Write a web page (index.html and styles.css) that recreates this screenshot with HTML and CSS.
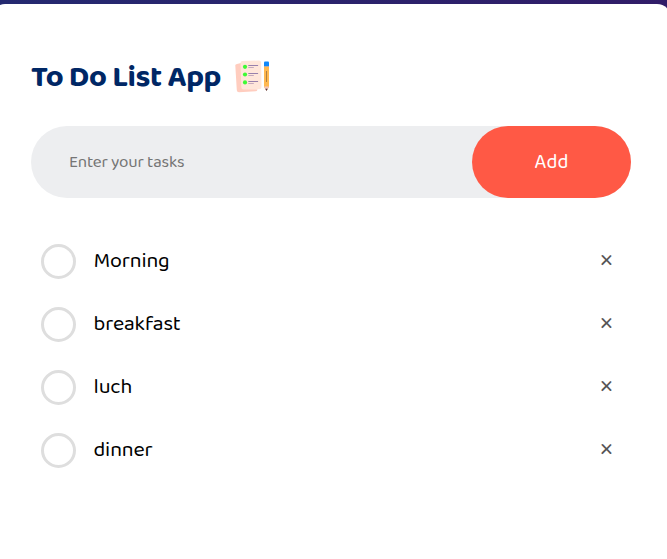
FILE: index.html
```html
<!DOCTYPE html>
<html lang="en">
<head>
<meta charset="utf-8">
<title>To Do List App</title>
<link rel="stylesheet" href="styles.css">
</head>
<body>
<main class="card">
  <h1 class="title"><span>To Do List App</span>
    <svg class="logo" width="36" height="36" viewBox="0 0 36 36">
      <path fill="#ffcdbf" d="M2 5 6 4l2 26 14.500.2-.5 1.500-1 .5-17 1q-2 0-2.200-2L.3 6.500Q.2 5.200 2 5Z"/>
      <path fill="#ffe6da" d="M7.500 2 24 1.500q2 0 2.100 2L26.500 28q0 2-2 2.200L8.500 30.500q-2 0-2.200-2L5.500 4q0-2 2-2Z"/>
      <g fill="#3dfa35"><circle cx="10" cy="7.800" r="2.100"/><circle cx="10" cy="15.500" r="2.100"/><circle cx="10" cy="23.400" r="2.100"/></g>
      <path stroke="#9880ac" stroke-width="1" d="M13.300 6.500h9.800M13.300 14.500h9.800M13.300 22.500h9.800"/>
      <path stroke="#c5a9bd" stroke-width="1" d="M13.300 8.500h5.500M13.300 16.500h5.500M13.300 24.500h5.500"/>
      <path fill="#ffb850" d="M29 6h5v22l-2.500 4-2.500-4Z"/>
      <path fill="#0f88fa" d="M29 3.500q0-1 1-1h3q1 0 1 1V7h-5Z"/>
      <path fill="#b8aaa0" d="M29 7h5v1h-5Z"/>
      <path stroke="#b07f3f" stroke-width="1" d="M31.500 12v11"/>
      <path fill="#f5c5bd" d="M29 27.500h5L31.500 32Z"/>
      <path fill="#49344b" d="M30.300 29.800h2.400L31.500 32Z"/>
    </svg>
  </h1>
  <div class="row">
    <input class="field" type="text" placeholder="Enter your tasks">
    <button class="add">Add</button>
  </div>
  <ul class="tasks">
    <li class="task"><i class="check"></i><span class="name">Morning</span><span class="close">×</span></li>
    <li class="task"><i class="check"></i><span class="name">breakfast</span><span class="close">×</span></li>
    <li class="task"><i class="check"></i><span class="name">luch</span><span class="close">×</span></li>
    <li class="task"><i class="check"></i><span class="name">dinner</span><span class="close">×</span></li>
  </ul>
</main>
</body>
</html>
```
FILE: styles.css
```css
* { box-sizing: border-box; margin: 0; padding: 0; }
html, body { height: 100%; overflow: hidden; }
body {
  padding-top: 4px;
  background: linear-gradient(90deg, #242970, #311c68);
  font-family: "Baloo 2", "Noto Sans", sans-serif;
}
.card {
  width: 680px;
  height: 555px;
  margin-left: -9px;
  padding: 54px 40px 0;
  border-radius: 14px 14px 0 0;
  background: #fff;
}
.title {
  display: flex;
  align-items: center;
  height: 38px;
  gap: 14px;
  color: #002765;
  font-size: 31px;
  font-weight: 700;
  letter-spacing: -0.45px;
  white-space: nowrap;
}
.title span { width: 190px; padding-top: 1px; }
.logo { flex: none; }
.row {
  display: flex;
  width: 600px;
  height: 72px;
  margin-top: 30px;
  border-radius: 36px;
  background: #edeef0;
}
.field {
  flex: 1;
  min-width: 0;
  padding-left: 38px;
  border: 0;
  outline: 0;
  background: transparent;
  font: 17px "Baloo 2", "Noto Sans", sans-serif;
  letter-spacing: -0.18px;
}
.field::placeholder { color: #757575; }
.add {
  width: 159px;
  border: 0;
  border-radius: 36px;
  background: #ff5945;
  color: #fff;
  font: 400 20px "Baloo 2", "Noto Sans", sans-serif;
}
.tasks { width: 600px; margin-top: 32px; list-style: none; }
.task {
  display: flex;
  align-items: center;
  height: 63px;
  padding: 0 18px 0 10px;
}
.check {
  width: 35px;
  height: 35px;
  border: 3px solid #dedede;
  border-radius: 50%;
}
.name { flex: 1; margin: 0 0 2px 17.500px; color: #000; font-size: 21.500px; letter-spacing: -0.15px; line-height: 28px; }
.close { margin-bottom: 1px; color: #555; font-size: 27px; line-height: 28px; }
```
